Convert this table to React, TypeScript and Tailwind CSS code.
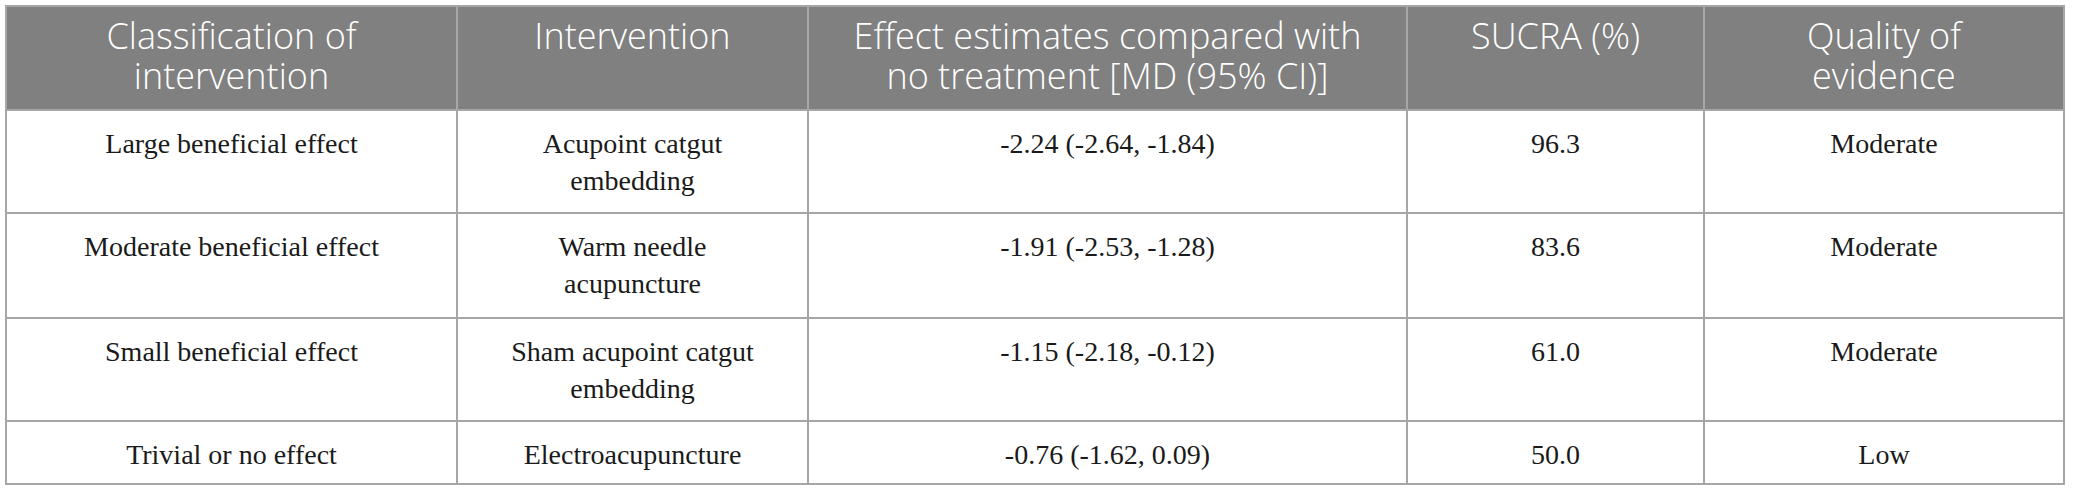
const headers: string[][] = [
  ['Classification of', 'intervention'],
  ['Intervention'],
  ['Effect estimates compared with', 'no treatment [MD (95% CI)]'],
  ['SUCRA (%)'],
  ['Quality of', 'evidence'],
];

const rows: string[][][] = [
  [['Large beneficial effect'], ['Acupoint catgut', 'embedding'], ['-2.24 (-2.64, -1.84)'], ['96.3'], ['Moderate']],
  [['Moderate beneficial effect'], ['Warm needle', 'acupuncture'], ['-1.91 (-2.53, -1.28)'], ['83.6'], ['Moderate']],
  [['Small beneficial effect'], ['Sham acupoint catgut', 'embedding'], ['-1.15 (-2.18, -0.12)'], ['61.0'], ['Moderate']],
  [['Trivial or no effect'], ['Electroacupuncture'], ['-0.76 (-1.62, 0.09)'], ['50.0'], ['Low']],
];

function Lines({ lines }: { lines: string[] }) {
  return (
    <>
      {lines.map((l, i) => (
        <div key={i}>{l}</div>
      ))}
    </>
  );
}

export default function App() {
  return (
    <div className="w-[2073px] h-[490px] bg-white pt-[5px] pl-[5px]">
      <div className="w-[2060px] grid grid-cols-[451px_351px_599px_297px_360px] grid-rows-[104px_103px_105px_103px_63px] border-t-2 border-l-2 border-[#a6a6a6]">
        {/* Header */}
        {headers.map((h, i) => (
          <div
            key={i}
            className="bg-[#808080] border-r-2 border-b-2 border-[#a6a6a6] pt-[9px] text-center text-white text-[36px] leading-[40px] font-light font-['Open_Sans',sans-serif]"
          >
            <Lines lines={h} />
          </div>
        ))}

        {/* Body */}
        {rows.map((row, r) =>
          row.map((cell, c) => (
            <div
              key={`${r}-${c}`}
              className="border-r-2 border-b-2 border-[#a6a6a6] pt-[14px] text-center text-[#1a1a1a] text-[28px] leading-[37px] font-['Liberation_Serif',serif]"
            >
              <Lines lines={cell} />
            </div>
          ))
        )}
      </div>
    </div>
  );
}
